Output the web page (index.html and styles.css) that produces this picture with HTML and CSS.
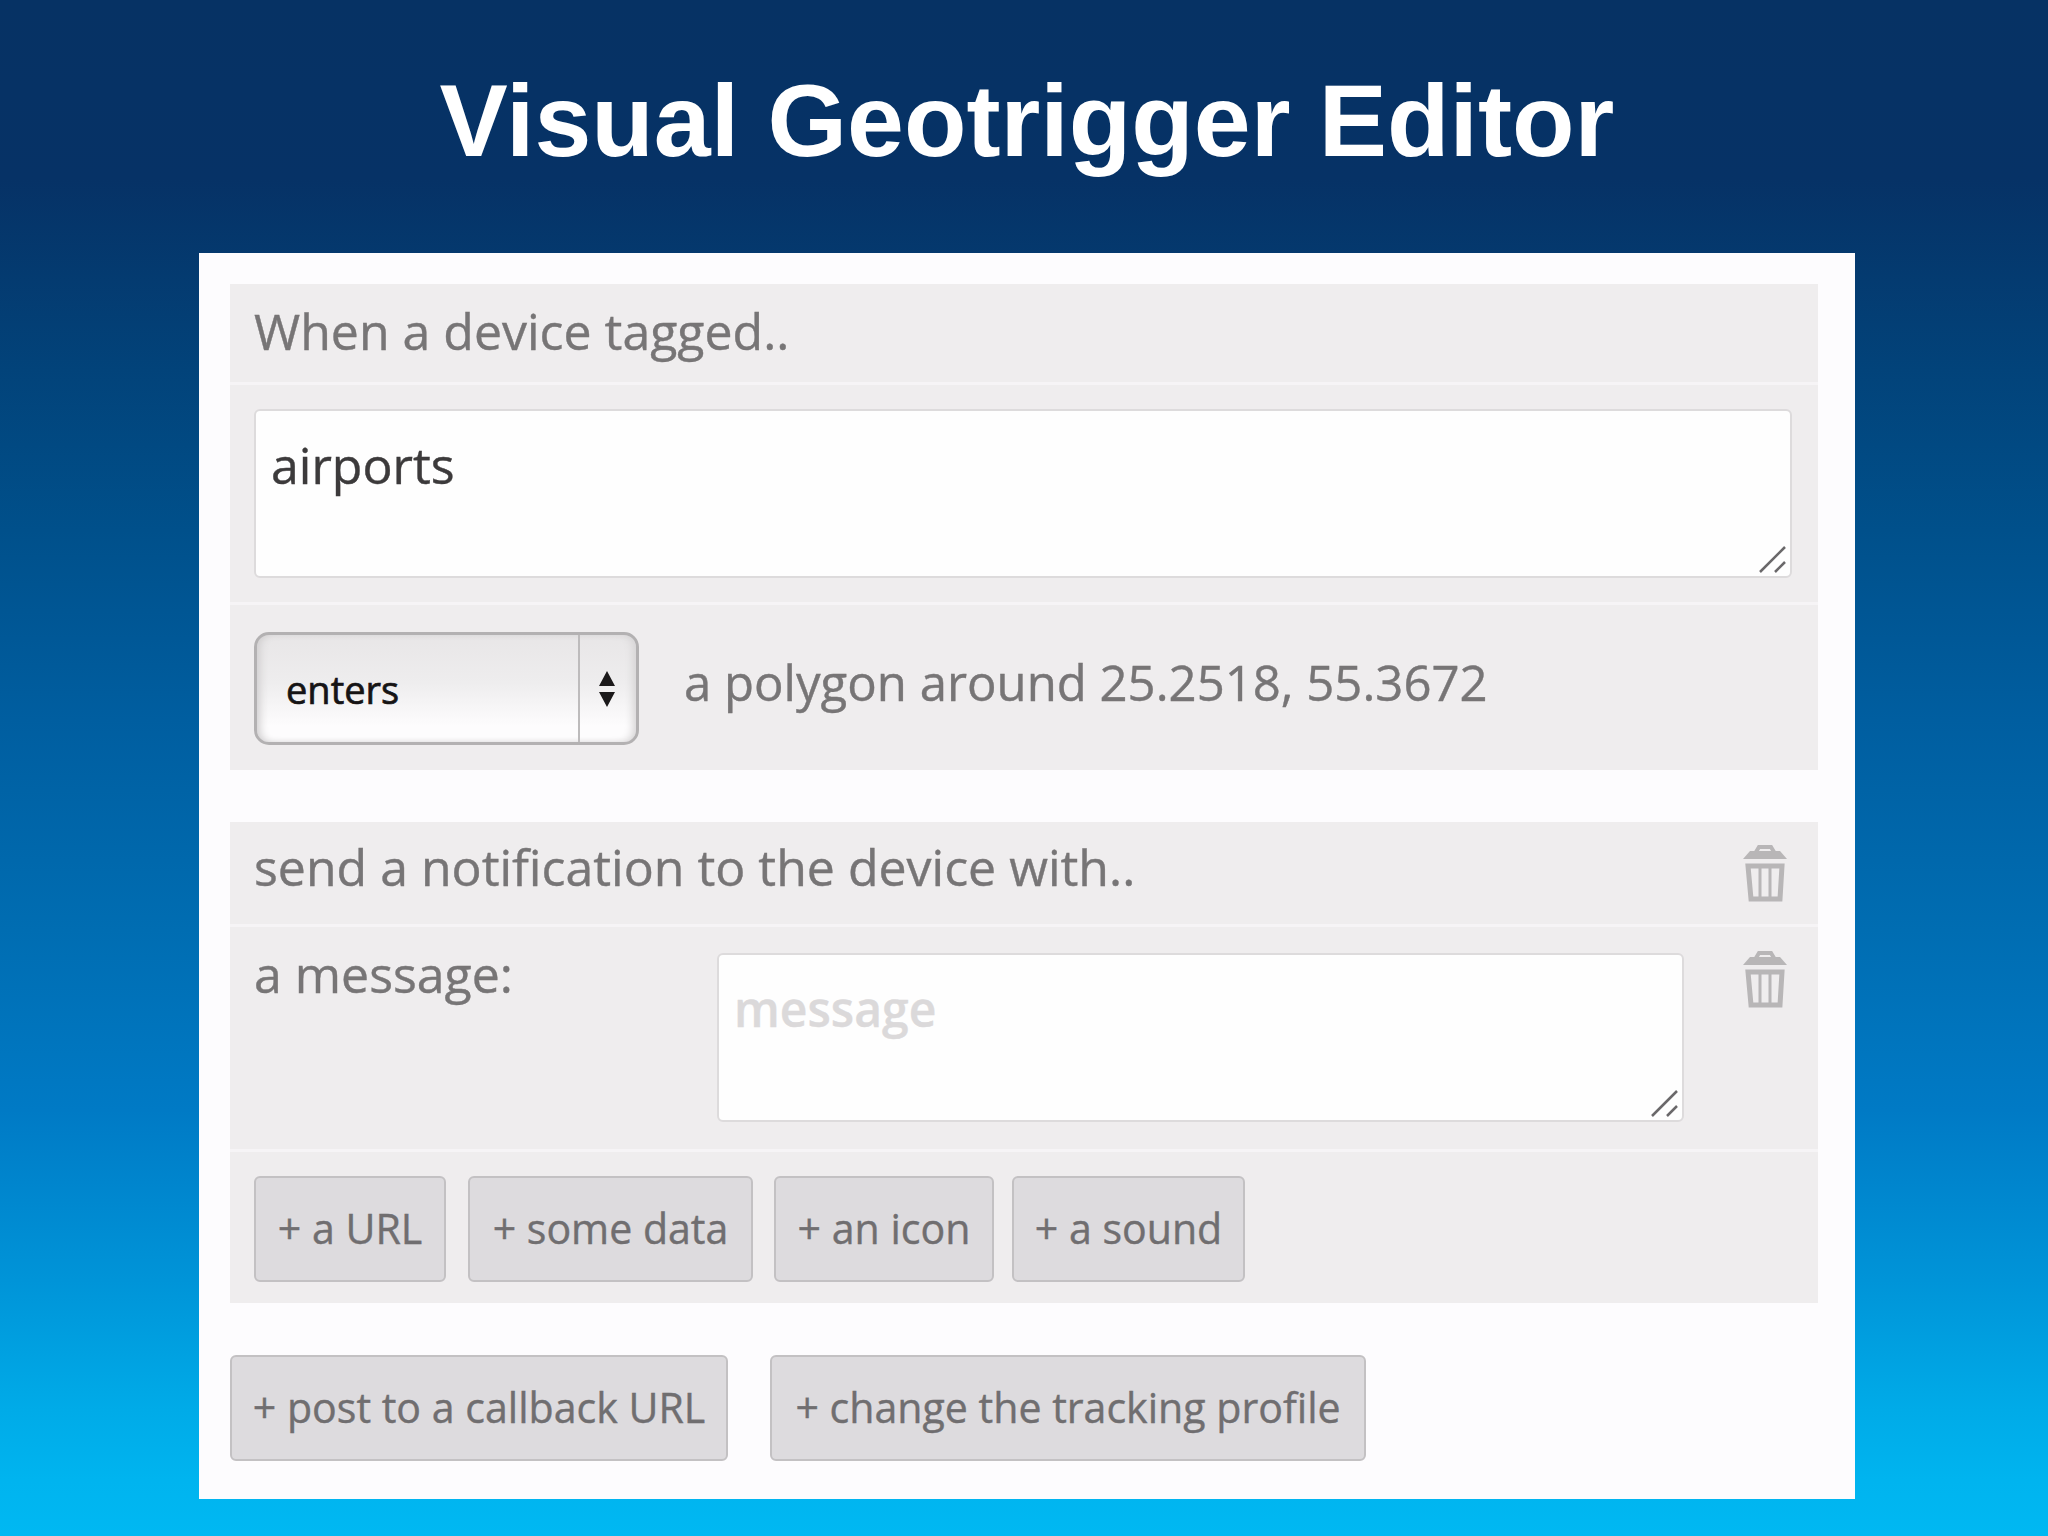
FILE: index.html
```html
<!DOCTYPE html>
<html lang="en">
<head>
    <meta charset="UTF-8">
    <meta name="viewport" content="width=device-width, initial-scale=1.0">
    <title>Visual Geotrigger Editor</title>
    <link rel="stylesheet" href="styles.css">
</head>
<body>
    <h1>Visual Geotrigger Editor</h1>
    <div class="editor">
        <div class="group condition">
            <div class="row heading">When a device tagged..</div>
            <div class="row tags">
                <div class="field">
                    <textarea>airports</textarea>
                    <svg class="grip" viewBox="0 0 28 28"><path d="M1 26 26 1M16 26l10-10"/></svg>
                </div>
            </div>
            <div class="row place">
                <div class="select">
                    <span class="value">enters</span>
                    <span class="arrows">
                        <svg viewBox="0 0 18 36"><path d="M9 0l8 15H1zM9 36l8-15H1z"/></svg>
                    </span>
                </div>
                <span class="text">a polygon around 25.2518, 55.3672</span>
            </div>
        </div>

        <div class="group action">
            <div class="row heading">
                <span class="label">send a notification to the device with..</span>
                <svg class="trash" viewBox="0 0 46 58">
                    <path class="lid" d="M14 8 17 3h12l3 5"/>
                    <path class="cover" d="M1 15 8 7h30l7 8z"/>
                    <path class="can" d="M6 22h34l-2 33H9z"/>
                    <path class="bars" d="M18 22v32M28 22v32"/>
                </svg>
            </div>
            <div class="row message">
                <span class="label">a message:</span>
                <div class="field">
                    <textarea placeholder="message"></textarea>
                    <svg class="grip" viewBox="0 0 28 28"><path d="M1 26 26 1M16 26l10-10"/></svg>
                </div>
                <svg class="trash" viewBox="0 0 46 58">
                    <path class="lid" d="M14 8 17 3h12l3 5"/>
                    <path class="cover" d="M1 15 8 7h30l7 8z"/>
                    <path class="can" d="M6 22h34l-2 33H9z"/>
                    <path class="bars" d="M18 22v32M28 22v32"/>
                </svg>
            </div>
            <div class="row extras">
                <button class="add-url">+ a URL</button>
                <button class="add-data">+ some data</button>
                <button class="add-icon">+ an icon</button>
                <button class="add-sound">+ a sound</button>
            </div>
        </div>

        <div class="actions">
            <button class="add-callback">+ post to a callback URL</button>
            <button class="add-profile">+ change the tracking profile</button>
        </div>
    </div>
</body>
</html>
```
FILE: styles.css
```css
* {
    box-sizing: border-box;
}
body {
    margin: 0;
    height: 1536px;
    overflow: hidden;
    display: flex;
    flex-direction: column;
    background: linear-gradient(#063264 0, #063266 180px, #02437a 370px, #00508b 530px, #005ea0 720px, #006db2 930px, #007ac5 1110px, #0094d8 1280px, #00abe8 1410px, #00b4ef 1480px, #00b8f2 1536px);
    font-family: "Open Sans", "Noto Sans", sans-serif;
    font-size: 50px;
    line-height: 68px;
    color: #777576;
    -webkit-text-stroke: 0.4px;
}
h1 {
    margin: 0;
    height: 253px;
    padding-left: 6px;
    font-family: "Liberation Sans", Arial, sans-serif;
    font-size: 102.3px;
    line-height: 241px;
    font-weight: bold;
    text-align: center;
    color: #fff;
    -webkit-text-stroke: 0;
}
.editor {
    width: 1656px;
    height: 1246px;
    margin-left: 199px;
    padding: 31px 37px 0 31px;
    background: #fdfcfe;
}
.group {
    margin-bottom: 53px;
    background: #efedee;
}
.row {
    display: flex;
    align-items: flex-start;
    padding: 0 26px 0 24px;
    border-bottom: 3px solid #f6f4f6;
    white-space: nowrap;
}
.row:last-child {
    border-bottom: none;
}
.condition .heading {
    height: 101px;
    padding-top: 13px;
}
.tags {
    height: 220px;
    padding-top: 24px;
}
.place {
    height: 165px;
    padding-top: 27px;
    gap: 45px;
}
.condition {
    margin-bottom: 52px;
}
.place .text {
    margin-top: 16px;
    font-size: 49.1px;
}
.action .heading {
    height: 105px;
    padding-top: 11px;
}
.message {
    height: 225px;
    padding-top: 26px;
}
.label {
    flex: 1;
}
.message .label {
    margin-top: -13px;
}
.extras {
    height: 151px;
    padding-top: 24px;
}
.action {
    margin-bottom: 52px;
}

.field {
    position: relative;
    width: 100%;
    height: 169px;
}
.message .field {
    width: 967px;
    margin-right: 58px;
}
textarea {
    display: block;
    width: 100%;
    height: 100%;
    padding: 20px 15px 0;
    border: 2px solid #dddbdc;
    border-radius: 6px;
    background: #fefefe;
    font: inherit;
    color: #3c3a3b;
    resize: none;
    overflow: hidden;
}
textarea::placeholder {
    color: #dbd9da;
    font-weight: 600;
    font-size: 48px;
    opacity: 1;
}
.grip {
    position: absolute;
    right: 5px;
    bottom: 4px;
    width: 28px;
    height: 28px;
    fill: none;
    stroke: #6a686a;
    stroke-width: 2.5;
}

.select {
    display: flex;
    width: 385px;
    height: 113px;
    border: 3px solid #b3b1b2;
    border-radius: 15px;
    background: linear-gradient(#e8e6e7, #eeedee 45%, #fdfcfd 85%);
    box-shadow: inset 6px 0 8px -3px #cfcdce, inset -6px 0 8px -3px #d5d3d4;
    font-size: 38px;
    line-height: 108px;
    color: #161415;
}
.value {
    flex: 1;
    padding-left: 29px;
    -webkit-text-stroke: 0.7px #161415;
}
.arrows {
    display: flex;
    width: 58px;
    justify-content: center;
    align-items: center;
    padding-right: 3px;
    border-left: 2px solid #bdbbbc;
}
.arrows svg {
    width: 18px;
    height: 36px;
    fill: #1b191a;
}

.trash {
    flex: none;
    width: 46px;
    height: 58px;
    margin-top: 11px;
    margin-right: 4px;
    fill: none;
    stroke: #b8b6b7;
    stroke-width: 4;
}
.message .trash {
    margin-top: -3px;
}
.cover {
    fill: #b8b6b7;
    stroke: none;
}
.can {
    stroke-width: 5;
}
.bars {
    stroke-width: 3;
}

button {
    height: 106px;
    padding: 0 0 2px;
    border: 2px solid #c3c1c3;
    border-radius: 6px;
    background: #dddbde;
    font: inherit;
    font-size: 41.1px;
    color: #706e70;
    -webkit-text-stroke: 0.4px;
    white-space: nowrap;
}
.add-url {
    width: 192px;
    margin-right: 22px;
}
.add-data {
    width: 285px;
    margin-right: 21px;
}
.add-icon {
    width: 220px;
    margin-right: 18px;
}
.add-sound {
    width: 233px;
}
.actions {
    display: flex;
    gap: 42px;
}
.add-callback {
    width: 498px;
}
.add-profile {
    width: 596px;
}
```
